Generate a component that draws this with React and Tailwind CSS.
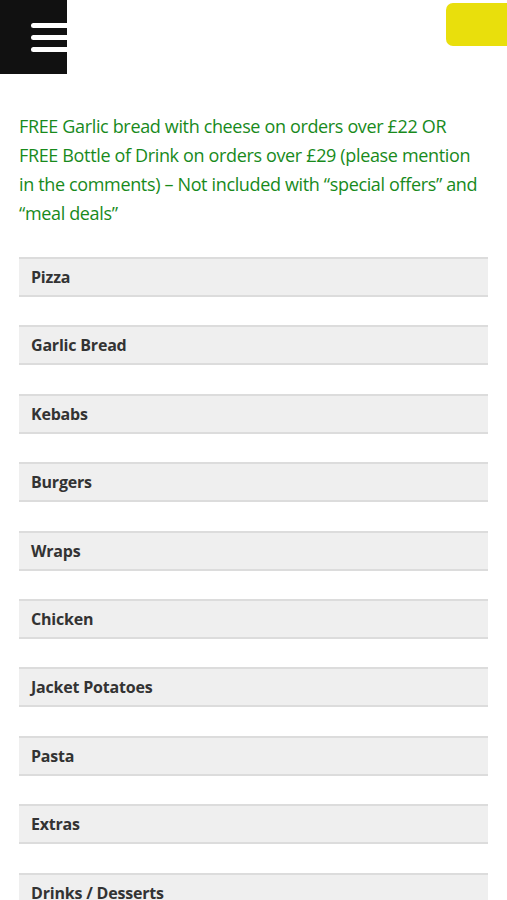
import React from 'react';

const categories = [
  'Pizza',
  'Garlic Bread',
  'Kebabs',
  'Burgers',
  'Wraps',
  'Chicken',
  'Jacket Potatoes',
  'Pasta',
  'Extras',
  'Drinks / Desserts',
];

export default function App() {
  return (
    <div className="min-h-[900px] bg-white font-['Open_Sans',sans-serif]">
      {/* Top bar */}
      <div className="flex items-start justify-between">
        <div className="w-[67px] h-[74px] bg-[#111] flex flex-col items-end justify-center gap-[7px] pt-[1px]">
          <span className="block w-[36px] h-[5px] bg-white rounded-l-full" />
          <span className="block w-[36px] h-[5px] bg-white rounded-l-full" />
          <span className="block w-[36px] h-[5px] bg-white rounded-l-full" />
        </div>
        <button className="mt-[3px] w-[61px] h-[43px] bg-[#e9df0c] rounded-l-[7px]" />
      </div>

      {/* Offer notice */}
      <p className="mt-[38px] px-[19px] text-[18px] leading-[29px] font-medium text-[#188a1c] tracking-[-0.35px]">
        FREE Garlic bread with cheese on orders over £22 OR FREE Bottle of Drink on orders over £29 (please mention in the comments) – Not included with “special offers” and “meal deals”
      </p>

      {/* Menu categories */}
      <div className="mt-[29px] mx-[19px] flex flex-col gap-[28.4px]">
        {categories.map((c) => (
          <div
            key={c}
            className="h-[40px] bg-[#efefef] border-t-2 border-b-2 border-[#dcdcdc] flex items-center px-[12px]"
          >
            <span className="text-[16px] font-bold text-[#333] tracking-[-0.2px]">{c}</span>
          </div>
        ))}
      </div>
    </div>
  );
}
